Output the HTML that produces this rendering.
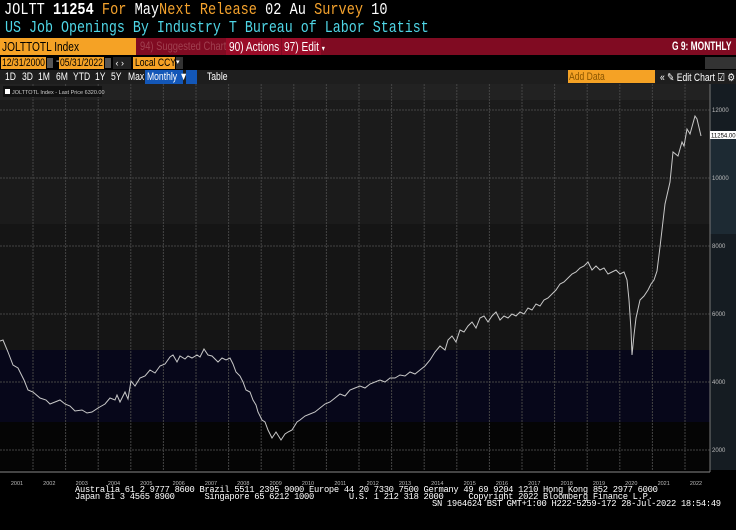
<!DOCTYPE html>
<html><head><meta charset="utf-8"><style>
body{margin:0;width:736px;height:530px;background:#000;overflow:hidden;position:relative;font-family:"Liberation Sans",sans-serif}
.a{position:absolute;white-space:nowrap}
.mono{font-family:"Liberation Mono","DejaVu Sans Mono",monospace}
.nb{font-family:"Liberation Sans",sans-serif;font-size:11px;transform-origin:0 0;transform:scaleX(0.78)}
.t{position:absolute;top:71px;color:#fff;font-size:11px;white-space:nowrap;transform-origin:0 0;transform:scaleX(0.78)}
</style></head><body>
<div class="a mono" style="left:4px;top:1px;font-size:13.6px;line-height:18px;color:#fff;transform-origin:0 0;transform:scaleY(1.2)">JOLTT <b>11254</b> <span style="color:#f4a22d">For</span> May<span style="color:#f4a22d">Next Release</span> 02 Au <span style="color:#f4a22d">Survey</span> 10</div>
<div class="a mono" style="left:5px;top:19px;font-size:13.6px;line-height:18px;color:#4fd6e6;transform-origin:0 0;transform:scaleX(0.98) scaleY(1.2)">US Job Openings By Industry T Bureau of Labor Statist</div>
<div class="a" style="left:0;top:38px;width:736px;height:17px;background:#800b22"></div>
<div class="a" style="left:0;top:38px;width:136px;height:17px;background:#f5a225"></div>
<div class="a nb" style="left:2px;top:38px;color:#000;font-size:13px;line-height:17px">JOLTTOTL Index</div>
<div class="a nb" style="left:140px;top:38px;line-height:17px;color:#a04050;font-size:12px">94) Suggested Charts</div>
<div class="a" style="left:226px;top:38px;width:55px;height:17px;background:#9a0c28"></div>
<div class="a nb" style="left:229px;top:38px;line-height:17px;color:#fff;font-size:13px">90) Actions <span style="font-size:8px">▾</span></div>
<div class="a" style="left:282px;top:38px;width:39px;height:17px;background:#9a0c28"></div>
<div class="a nb" style="left:284px;top:38px;line-height:17px;color:#fff;font-size:13px">97) Edit <span style="font-size:8px">▾</span></div>
<div class="a nb" style="left:672px;top:38px;line-height:17px;color:#fff;font-size:12px;font-weight:bold;transform:scaleX(0.7)">G 9: MONTHLY</div>
<div class="a" style="left:1px;top:57px;width:45px;height:12px;background:#f5a225"></div>
<div class="a nb" style="left:2px;top:57px;color:#000;line-height:12px;font-size:11px">12/31/2000</div>
<div class="a" style="left:47px;top:58px;width:6px;height:10px;background:#555"></div>
<div class="a" style="left:56px;top:56px;color:#fff;font-size:10px">-</div>
<div class="a" style="left:59px;top:57px;width:45px;height:12px;background:#f5a225"></div>
<div class="a nb" style="left:60px;top:57px;color:#000;line-height:12px;font-size:11px">05/31/2022</div>
<div class="a" style="left:105px;top:58px;width:6px;height:10px;background:#555"></div>
<div class="a" style="left:113px;top:57px;width:18px;height:12px;background:#222;color:#fff;font-size:9px;line-height:12px">&nbsp;‹&nbsp;›</div>
<div class="a" style="left:133px;top:57px;width:42px;height:12px;background:#f5a225"></div>
<div class="a nb" style="left:135px;top:57px;color:#000;line-height:12px;font-size:11px">Local CCY</div>
<div class="a" style="left:176px;top:57px;width:7px;height:12px;background:#333;color:#fff;font-size:7px;line-height:12px">▾</div>
<div class="a" style="left:705px;top:57px;width:31px;height:12px;background:#333"></div>
<div class="a" style="left:0;top:70px;width:736px;height:14px;background:#1e1e1e"></div>
<div class="t" style="left:5px">1D</div><div class="t" style="left:22px">3D</div><div class="t" style="left:38px">1M</div><div class="t" style="left:56px">6M</div><div class="t" style="left:73px">YTD</div><div class="t" style="left:95px">1Y</div><div class="t" style="left:111px">5Y</div><div class="t" style="left:128px">Max</div>
<div class="a" style="left:145px;top:70px;width:38px;height:14px;background:#1357b8"></div>
<div class="t" style="left:147px">Monthly ▼</div>
<div class="a" style="left:186px;top:70px;width:11px;height:14px;background:#1357b8"></div>
<div class="t" style="left:207px">Table</div>
<div class="a" style="left:568px;top:70px;width:87px;height:13px;background:#f5a225"></div>
<div class="t" style="left:569px;color:#8a5500">Add Data</div>
<div class="t" style="left:660px">« ✎ Edit Chart ☑ ⚙</div>
<svg class="a" style="left:0;top:84px" width="736" height="446">
<rect x="0" y="0" width="710" height="16" fill="#222"/>
<rect x="0" y="16" width="710" height="124" fill="#1b1b1b"/>
<rect x="0" y="140" width="710" height="126" fill="#151515"/>
<rect x="0" y="266" width="710" height="72" fill="#07071a"/>
<rect x="0" y="338" width="710" height="48" fill="#050505"/>
<rect x="710" y="0" width="26" height="386" fill="#151c22"/>
<rect x="710" y="50" width="26" height="100" fill="#1d2a33"/>
<g stroke="#444" stroke-dasharray="2,1" stroke-width="1">
<line x1="0" y1="26" x2="710" y2="26"/><line x1="0" y1="94" x2="710" y2="94"/><line x1="0" y1="162" x2="710" y2="162"/><line x1="0" y1="230" x2="710" y2="230"/><line x1="0" y1="298" x2="710" y2="298"/><line x1="0" y1="366" x2="710" y2="366"/>
<line x1="33" y1="0" x2="33" y2="386"/><line x1="65.6" y1="0" x2="65.6" y2="386"/><line x1="98.2" y1="0" x2="98.2" y2="386"/><line x1="130.8" y1="0" x2="130.8" y2="386"/><line x1="163.4" y1="0" x2="163.4" y2="386"/><line x1="196" y1="0" x2="196" y2="386"/><line x1="228.6" y1="0" x2="228.6" y2="386"/><line x1="261.2" y1="0" x2="261.2" y2="386"/><line x1="293.8" y1="0" x2="293.8" y2="386"/><line x1="326.4" y1="0" x2="326.4" y2="386"/><line x1="359" y1="0" x2="359" y2="386"/><line x1="391.6" y1="0" x2="391.6" y2="386"/><line x1="424.2" y1="0" x2="424.2" y2="386"/><line x1="456.8" y1="0" x2="456.8" y2="386"/><line x1="489.4" y1="0" x2="489.4" y2="386"/><line x1="522" y1="0" x2="522" y2="386"/><line x1="554.6" y1="0" x2="554.6" y2="386"/><line x1="587.2" y1="0" x2="587.2" y2="386"/><line x1="619.8" y1="0" x2="619.8" y2="386"/><line x1="652.4" y1="0" x2="652.4" y2="386"/><line x1="685" y1="0" x2="685" y2="386"/>
</g>
<line x1="0" y1="388" x2="710" y2="388" stroke="#888"/>
<line x1="710" y1="0" x2="710" y2="388" stroke="#777"/>
<g transform="translate(0,-84)">
<polyline fill="none" stroke="#c8c8c8" stroke-width="1" points="0,341 3,340 8,352 13,365 18,368 24,380 28,390 33,392 40,398 46,400 50,404 55,402 60,400 65,404 70,406 75,411 82,410 87,413 92,412 98,408 105,404 110,398 115,400 117,395 120,402 125,392 128,399 131,381 135,386 140,378 145,376 150,370 155,373 160,366 165,364 170,357 173,355 177,362 180,356 185,359 188,356 192,358 197,355 200,357 204,349 208,355 212,356 218,362 222,358 226,360 230,358 233,364 236,372 240,376 243,382 246,390 250,392 253,400 256,405 258,412 262,420 265,422 268,430 272,438 276,432 281,440 285,434 288,432 292,430 297,422 300,420 305,416 310,414 315,412 320,408 325,404 330,402 335,398 340,394 345,396 350,390 355,388 360,386 365,388 370,384 375,382 380,380 385,382 390,378 395,378 400,375 405,376 410,372 415,374 420,370 425,366 430,360 435,352 440,346 445,350 448,340 452,336 456,342 460,330 464,332 468,326 472,322 476,328 480,318 484,316 488,322 492,316 496,312 500,320 504,316 508,318 512,314 516,316 520,312 524,314 528,308 532,310 536,304 540,306 544,300 548,298 552,294 556,290 560,284 564,282 568,278 572,274 576,272 580,268 584,266 588,262 592,270 596,266 600,270 604,268 608,274 612,272 616,270 620,274 624,272 627,280 629,300 631,330 632,355 634,335 636,318 640,300 644,296 648,290 651,284 654,280 657,271 660,247 665,204 670,182 673,152 678,156 682,142 684,146 687,129 690,134 695,116 697,119 701,136"/>
</g>
<g font-size="6" fill="#bbb" font-family="Liberation Sans,sans-serif">
<text x="712" y="28">12000</text><text x="712" y="96">10000</text><text x="712" y="164">8000</text><text x="712" y="232">6000</text><text x="712" y="300">4000</text><text x="712" y="368">2000</text>
</g>
<rect x="710" y="47" width="26" height="8" fill="#fff"/>
<text x="711" y="53.5" font-size="6" fill="#000" font-family="Liberation Sans,sans-serif">11254.00</text>
<rect x="3" y="2" width="99" height="11" fill="#111"/>
<rect x="5" y="5" width="5" height="5" fill="#fff"/>
<text x="12" y="10" font-size="5.5" fill="#ccc" font-family="Liberation Sans,sans-serif">JOLTTOTL Index - Last Price 6320.00</text>
<g font-size="5.5" fill="#bbb" text-anchor="middle" font-family="Liberation Sans,sans-serif">
<text x="17" y="401">2001</text><text x="49.3" y="401">2002</text><text x="81.7" y="401">2003</text><text x="114" y="401">2004</text><text x="146.3" y="401">2005</text><text x="178.7" y="401">2006</text><text x="211" y="401">2007</text><text x="243.3" y="401">2008</text><text x="275.7" y="401">2009</text><text x="308" y="401">2010</text><text x="340.3" y="401">2011</text><text x="372.7" y="401">2012</text><text x="405" y="401">2013</text><text x="437.3" y="401">2014</text><text x="469.7" y="401">2015</text><text x="502" y="401">2016</text><text x="534.3" y="401">2017</text><text x="566.7" y="401">2018</text><text x="599" y="401">2019</text><text x="631.3" y="401">2020</text><text x="663.7" y="401">2021</text><text x="696" y="401">2022</text>
</g>
</svg>
<div class="a mono" style="left:75px;top:487px;font-size:8.8px;line-height:7px;color:#fff;letter-spacing:-0.3px">Australia 61 2 9777 8600 Brazil 5511 2395 9000 Europe 44 20 7330 7500 Germany 49 69 9204 1210 Hong Kong 852 2977 6000<br>Japan 81 3 4565 8900&nbsp;&nbsp;&nbsp;&nbsp;&nbsp;&nbsp;Singapore 65 6212 1000&nbsp;&nbsp;&nbsp;&nbsp;&nbsp;&nbsp;&nbsp;U.S. 1 212 318 2000&nbsp;&nbsp;&nbsp;&nbsp;&nbsp;Copyright 2022 Bloomberg Finance L.P.</div>
<div class="a mono" style="left:432px;top:501px;font-size:8.8px;line-height:7px;color:#fff;letter-spacing:-0.3px">SN 1964624 BST  GMT+1:00 H222-5259-172 28-Jul-2022 18:54:49</div>
</body></html>
